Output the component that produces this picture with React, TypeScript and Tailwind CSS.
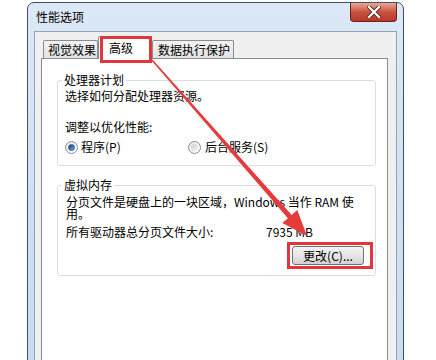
import React from "react"

function Radio({ checked }: { checked?: boolean }) {
  return (
    <span className="flex h-[13px] w-[13px] shrink-0 items-center justify-center rounded-full border border-[#8e8f8f] bg-gradient-to-br from-[#e6e6e6] to-[#ffffff]">
      {checked ? (
        <span className="h-[7px] w-[7px] rounded-full border border-[#2a5d8f] bg-gradient-to-br from-[#0f3f73] to-[#63b4ee]" />
      ) : (
        <span className="h-[7px] w-[7px] rounded-full bg-gradient-to-br from-[#d0d0d0] to-[#f4f4f4]" />
      )}
    </span>
  )
}

function CloseButton() {
  return (
    <div className="flex h-[19px] w-[47px] items-center justify-center rounded-b-[4px] border border-t-0 border-[#6b231a] bg-gradient-to-b from-[#e9a797] via-[#c9513f] to-[#b8382a]">
      <svg width="14" height="12" viewBox="0 0 14 12">
        <path d="M2 1 L12 11 M12 1 L2 11" stroke="#4a2a24" strokeWidth="4" strokeLinecap="square" />
        <path d="M2 1 L12 11 M12 1 L2 11" stroke="#ffffff" strokeWidth="2.2" strokeLinecap="square" />
      </svg>
    </div>
  )
}

export default function App() {
  return (
    <div
      className="relative h-[360px] w-[436px] overflow-hidden bg-white text-[12px] text-black"
      style={{ fontFamily: '"Noto Sans CJK SC", "Noto Sans", sans-serif' }}
    >
      {/* ================= WINDOW ================= */}
      <div className="ml-[27px] mt-[2px] flex h-[420px] w-[377px] flex-col rounded-t-[7px] border border-[#3f4f63] bg-gradient-to-b from-[#dce8f6] via-[#cfe0f3] to-[#c6daf0]">
        {/* title bar */}
        <div className="flex h-[28px] shrink-0 items-start justify-between">
          <span className="pl-[8px] pt-[7px] leading-[14px]">性能选项</span>
          <div className="mr-[6px]">
            <CloseButton />
          </div>
        </div>

        {/* client area */}
        <div className="mx-[6px] flex-1 overflow-hidden border border-[#8fa2b8] bg-[#f0f0f0] pl-[6px] pr-[8px]">
          {/* tabs */}
          <div className="flex h-[26px] items-end pl-[2px]">
            <div className="flex h-[18px] w-[55px] items-center rounded-t-[2px] border border-b-0 border-[#898c95] bg-gradient-to-b from-[#f3f3f3] to-[#e2e2e2] pl-[4px] leading-[14px]">
              视觉效果
            </div>
            <div className="relative z-10 -mb-px flex h-[23px] w-[54px] items-start rounded-t-[2px] border border-b-0 border-[#898c95] bg-white pl-[10px] pt-[4px] leading-[14px]">
              高级
              <span className="absolute left-px top-[-1px] h-[27px] w-[52px] border-[3px] border-[#e0363c]" />
            </div>
            <div className="flex h-[18px] w-[82px] items-center rounded-t-[2px] border border-b-0 border-[#898c95] bg-gradient-to-b from-[#f3f3f3] to-[#e2e2e2] pl-[5px] leading-[14px]">
              数据执行保护
            </div>
          </div>

          {/* panel */}
          <div className="h-[340px] border border-[#898c95] bg-white pl-[15px] pr-[11px] pt-[14px]">
            <fieldset className="rounded-[3px] border border-[#d5dfe5] p-0">
              <legend className="ml-[4px] px-[2px] leading-[14px]">处理器计划</legend>
              <div className="pb-[10px] pl-[7px] pt-[1px] leading-[16px]">
                <div>选择如何分配处理器资源。</div>
                <div className="mt-[15px]">调整以优化性能:</div>
                <div className="mt-[4px] flex items-center">
                  <div className="flex w-[123px] items-center gap-[3px]">
                    <Radio checked />
                    <span>程序(P)</span>
                  </div>
                  <div className="flex items-center gap-[4px]">
                    <Radio />
                    <span>后台服务(S)</span>
                  </div>
                </div>
              </div>
            </fieldset>

            <fieldset className="mt-[12px] rounded-[3px] border border-[#d5dfe5] p-0">
              <legend className="ml-[4px] px-[2px] leading-[14px]">虚拟内存</legend>
              <div className="whitespace-nowrap pb-[10px] pl-[8px] pr-[11px] pt-[4px] leading-[12px]">
                <div>
                  分页文件是硬盘上的一块区域，Windows 当作 RAM 使
                  <br />
                  用。
                </div>
                <div className="mt-[6px] flex">
                  <span className="w-[200px]">所有驱动器总分页文件大小:</span>
                  <span>7935 MB</span>
                </div>
                <div className="mt-[8px] flex justify-end">
                  <div className="relative">
                    <button className="flex h-[19px] w-[72px] items-center justify-center rounded-[3px] border border-[#707070] bg-gradient-to-b from-[#f4f4f4] via-[#e6e6e6] to-[#d2d2d2] leading-[14px]">
                      更改(C)...
                    </button>
                    <span className="absolute left-[-5px] top-[-4px] h-[27px] w-[86px] border-[3px] border-[#e0363c]" />
                  </div>
                </div>
              </div>
            </fieldset>
          </div>
        </div>
      </div>

      {/* ================= ANNOTATION ARROW ================= */}
      <svg className="pointer-events-none absolute left-0 top-0" width="436" height="360" viewBox="0 0 436 360">
        <polygon
          points="151.4,60.5 287.9,218.2 282.3,223.1 307,236 297.3,209.9 291.7,214.9 152.6,59.5"
          fill="#e53b3b"
        />
      </svg>
    </div>
  )
}
